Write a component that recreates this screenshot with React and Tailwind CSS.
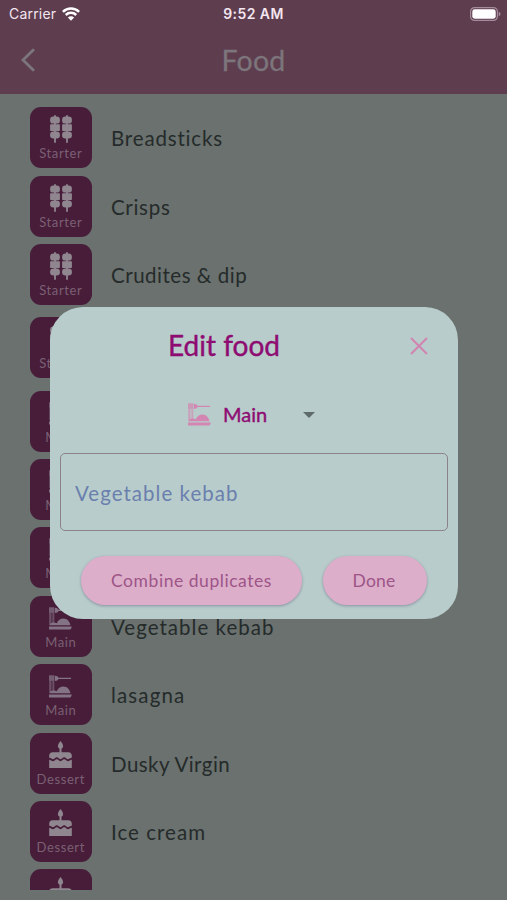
import { useState } from 'react';
import clsx from 'clsx';

const KebabIcon = ({ className }) => (
    <svg viewBox="0 0 24 28" fill="currentColor" className={className}>
        {[6, 18].map((x) => (
            <g key={x}>
                <rect x={x - 0.9} y="0" width="1.8" height="28" rx="0.9" />
                <rect x={x - 4.9} y="1.6" width="9.8" height="7" rx="3.2" />
                <rect x={x - 4.9} y="9.2" width="9.8" height="6.7" rx="0.6" />
                <rect x={x - 4.9} y="16.5" width="9.8" height="7.1" rx="3.3" />
            </g>
        ))}
    </svg>
);

const MainIcon = ({ className }) => (
    <svg viewBox="0 0 23 23" fill="currentColor" className={className}>
        {/* fork with pasta hanging off it */}
        <path d="M0 .3h5.400v5.600H0z" opacity=".75" />
        <path d="M5.900.8c2 0 3 .7 3.700 2h12.500v1.200H9.600C8.900 5.300 7.900 6 5.900 6z" />
        <path d="M.5 5.900h1.100V18H.5zM2.700 5.900h.7V18h-.7zM4.400 5.900h.8V16h-.8z" />
        <path d="M.5 18.200c.4-1.600 1.800-2.800 3.700-2.800 1.700 0 2.500.5 3.600.8 1.100-2.900 3.600-4.800 6.700-4.800 3.600 0 6.300 2.800 6.900 6.800z" />
        <path d="M0 19.400h22.700c0 1.900-1 3.200-2.600 3.200H0z" />
    </svg>
);

const CakeIcon = ({ className }) => (
    <svg viewBox="0 0 23 27" fill="currentColor" className={className}>
        <path d="M11.500 0c1.700 2.100 2.600 3.600 2.600 4.900a2.600 2.600 0 0 1-5.200 0C8.900 3.600 9.800 2.100 11.500 0z" />
        <rect x="10.500" y="7" width="2" height="5" />
        <path d="M3.500 11.200h16c2 0 3.300 1.400 3.300 3.300v2.200c-2.200 0-2.400 1.500-3.900 1.500-1.700 0-1.900-1.900-3.700-1.900s-2 1.900-3.700 1.900-1.900-1.900-3.700-1.900-2 1.900-3.700 1.900c-1.500 0-1.700-1.500-3.900-1.500v-2.200c0-1.900 1.300-3.300 3.300-3.300z" />
        <path d="M.2 18.700c1.800 0 2 1.500 3.900 1.500s2-1.900 3.700-1.900 2 1.900 3.700 1.900 1.900-1.900 3.700-1.900 2 1.900 3.700 1.900 2.100-1.500 3.900-1.500V27H.2z" />
    </svg>
);

const courses = {
    Starter: { Icon: KebabIcon, size: 'w-6 h-7' },
    Main: { Icon: MainIcon, size: 'w-[23px] h-[23px] mt-[3px] mb-[2px]' },
    Dessert: { Icon: CakeIcon, size: 'w-[23px] h-[27px] mb-px' },
};

const foods = [
    { course: 'Starter', name: 'Breadsticks', tracking: 'tracking-[0.83px]' },
    { course: 'Starter', name: 'Crisps', tracking: 'tracking-[0.7px]' },
    { course: 'Starter', name: 'Crudites & dip', tracking: 'tracking-[0.52px]' },
    { course: 'Starter', tall: true },
    { course: 'Main' },
    { course: 'Main' },
    { course: 'Main' },
    { course: 'Main', name: 'Vegetable kebab', tracking: 'tracking-[1.02px]' },
    { course: 'Main', name: 'lasagna', tracking: 'tracking-[1.15px]' },
    { course: 'Dessert', name: 'Dusky Virgin', tracking: 'tracking-[0.45px]' },
    { course: 'Dessert', name: 'Ice cream', tracking: 'tracking-[1.03px]' },
    { course: 'Dessert', hideLabel: true },
];

const FoodRow = ({ food }) => {
    const { Icon, size } = courses[food.course];

    return (
        <li className={clsx('flex shrink-0 items-center pl-[30px]', food.tall ? 'h-[78.2px]' : 'h-[68.4px]')}>
            <div className="flex h-[61px] w-[61.5px] shrink-0 flex-col items-center rounded-[11px] bg-[#471d39] pt-2 text-[#7b6074]">
                <Icon className={clsx('shrink-0', food.course === 'Main' ? 'text-[#847384]' : 'text-[#8f8690]', size)} />
                {!food.hideLabel && <span className="mt-[2px] text-[13px] leading-4 tracking-[0.6px]">{food.course}</span>}
            </div>
            <span className={clsx('ml-[19.5px] mt-[2px] text-[20.5px] text-[#252b2b]', food.tracking)}>{food.name}</span>
        </li>
    );
};

const StatusBar = () => (
    <div className="flex h-[27px] items-center justify-between pl-[9px] pr-[6px] font-['Inter'] text-[14px] text-[#f3e6ef]">
        <div className="flex w-[100px] items-center gap-[6px]">
            <span className="tracking-[0.2px]">Carrier</span>
            <svg viewBox="0 0 18 14" className="h-[14px] w-[18px]" fill="none" stroke="#fff" strokeWidth="2.500">
                <path d="M.9 4.900a11.600 11.600 0 0 1 16.200 0M3.800 8a7.400 7.400 0 0 1 10.400 0" />
                <path d="M9 13.800 5.900 10.600a4.400 4.400 0 0 1 6.200 0z" fill="#fff" stroke="none" />
            </svg>
        </div>
        <span className="mr-[3px] font-semibold tracking-[0.45px]">9:52 AM</span>
        <div className="flex w-[100px] justify-end">
            <svg viewBox="0 0 31 14" className="h-[14px] w-[31px]">
                <rect x=".6" y=".6" width="26.800" height="12.800" rx="4" fill="none" stroke="#a48c9c" strokeWidth="1.200" />
                <rect x="2.300" y="2.300" width="23.400" height="9.400" rx="2.400" fill="#fff" />
                <path d="M28.700 4.700c1.200.5 1.800 1.300 1.800 2.300s-.6 1.800-1.800 2.300z" fill="#a48c9c" />
            </svg>
        </div>
    </div>
);

const EditFoodDialog = () => {
    const [name, setName] = useState('Vegetable kebab');

    return (
        <div className="absolute left-[50px] top-[306.5px] flex h-[312px] w-[408px] flex-col rounded-[33px] bg-[#b8cdcb]">
            {/* Title */}
            <div className="flex h-[78px] shrink-0 items-center justify-between pl-[118px] pr-[30px]">
                <h2 className="-mt-px text-[28px] text-[#8e0c72] [-webkit-text-stroke:0.4px_#8e0c72]">Edit food</h2>
                <button>
                    <svg viewBox="0 0 18 18" className="size-[18px]" stroke="#d185b1" strokeWidth="2.200">
                        <path d="M1 1l16 16M17 1L1 17" />
                    </svg>
                </button>
            </div>

            {/* Course select */}
            <button className="flex h-[60px] shrink-0 items-center pl-[138px]">
                <MainIcon className="size-[23px] text-[#d386b2]" />
                <span className="-mt-[2px] ml-3 w-[80px] text-left text-[20px] text-[#8e0c72] [-webkit-text-stroke:0.4px_#8e0c72]">Main</span>
                <svg viewBox="0 0 12 6" className="h-[6px] w-3" fill="#5f6b6b">
                    <path d="M0 0h12L6 6z" />
                </svg>
            </button>

            <input
                value={name}
                onChange={(e) => setName(e.target.value)}
                className="mx-[10px] mt-[8.500px] h-[78px] shrink-0 rounded-[5px] border-[1.500px] border-[#8b828b] bg-transparent px-[14px] pt-px text-[20.5px] tracking-[1.02px] text-[#6b7fae] outline-none"
            />

            {/* Actions */}
            <div className="ml-[31px] mt-[25px] flex gap-[21px] text-[17.5px] text-[#9d5588]">
                <button className="h-[49px] w-[221px] rounded-full bg-[#dcaeca] pt-[2px] tracking-[0.55px] shadow-[0_1px_3px_rgba(80,70,110,0.45)]">Combine duplicates</button>
                <button className="h-[49px] w-[104px] rounded-full bg-[#dcaeca] pr-[2px] pt-[2px] tracking-[0.2px] shadow-[0_1px_3px_rgba(80,70,110,0.45)]">Done</button>
            </div>
        </div>
    );
};

export default function App() {
    return (
        <div className="relative flex h-[900px] w-[507px] flex-col overflow-hidden bg-[#6a716e] font-['Lato',sans-serif]">
            <header className="h-[93.5px] shrink-0 bg-[#5e3d4f]">
                <StatusBar />
                <div className="relative flex h-[65px] items-center justify-center text-[#7c757b]">
                    <svg viewBox="0 0 14 24" className="absolute left-[21px] top-[21px] h-6 w-[14px]" fill="none" stroke="currentColor" strokeWidth="2.800">
                        <path d="M13 1.200 2 12l11 10.800" />
                    </svg>
                    <h1 className="mt-[2px] text-[28.5px] tracking-[0.2px] [-webkit-text-stroke:0.3px_#7c757b]">Food</h1>
                </div>
            </header>

            <ul className="flex h-[796.5px] shrink-0 flex-col overflow-hidden pt-[10px]">
                {foods.map((food, i) => (
                    <FoodRow key={i} food={food} />
                ))}
            </ul>

            <EditFoodDialog />
        </div>
    );
}
